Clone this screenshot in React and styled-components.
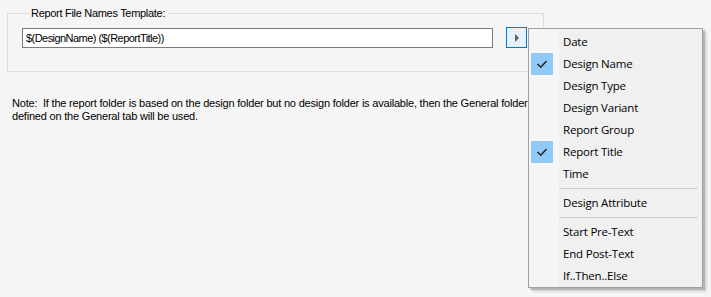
import React from "react";
import styled, { createGlobalStyle } from "styled-components";

const Global = createGlobalStyle`
  html, body { margin: 0; padding: 0; background: #f5f5f5; }
  body { width: 711px; height: 297px; overflow: hidden; }
`;

const Page = styled.div`
  position: relative;
  width: 711px;
  height: 297px;
  background: #f5f5f5;
  font-family: "Liberation Sans", Arial, sans-serif;
  font-size: 11px;
  color: #000;
  padding: 7px 0 0 7px;
  box-sizing: border-box;
`;

const Group = styled.fieldset`
  width: 537px;
  height: 65px;
  box-sizing: border-box;
  margin: 0;
  padding: 8px 0 0 14px;
  border: 1px solid #dcdcdc;
  border-radius: 0;
  display: flex;
  align-items: flex-start;
  gap: 13px;
  legend {
    margin-left: 7px;
    padding: 0 3px 0 2px;
    line-height: 13px;
    letter-spacing: -0.3px;
  }
`;

const Input = styled.div`
  width: 471px;
  height: 20px;
  box-sizing: border-box;
  border: 1px solid #7a7a7a;
  background: #fff;
  padding: 0 0 0 3px;
  line-height: 18px;
  letter-spacing: -0.55px;
`;

const ArrowButton = styled.div`
  width: 21px;
  height: 21px;
  margin-top: -1px;
  box-sizing: border-box;
  border: 1px solid #0078d7;
  background: #e5f1fb;
  display: flex;
  align-items: center;
  justify-content: center;
  &::after {
    content: "";
    border-left: 4px solid #606060;
    border-top: 4px solid transparent;
    border-bottom: 4px solid transparent;
    margin-left: 1px;
  }
`;

const Note = styled.p`
  margin: 25px 0 0 5px;
  line-height: 13px;
  width: 560px;
  letter-spacing: -0.2px;
`;

const Menu = styled.div`
  position: absolute;
  left: 528px;
  top: 28px;
  width: 175px;
  height: 260px;
  box-sizing: border-box;
  border: 1px solid #a0a0a0;
  background: linear-gradient(to right, #f5f5f5 0 30px, #f0f0f0 30px);
  box-shadow: 2px 2px 1px rgba(0, 0, 0, 0.18), 4px 4px 2px rgba(0, 0, 0, 0.1);
  padding: 2px 2px 0 2px;
  font-family: "Open Sans", "Noto Sans", sans-serif;
  font-size: 11.5px;
  color: #000;
  display: flex;
  flex-direction: column;
`;

const Item = styled.div`
  height: 22px;
  flex: none;
  display: flex;
  align-items: center;
  gap: 10px;
`;

const Check = styled.div`
  width: 22px;
  height: 22px;
  display: flex;
  align-items: center;
  justify-content: center;
  background: ${(p) => (p.$on ? "#90c8f6" : "transparent")};
`;

const Label = styled.span`
  line-height: 22px;
  letter-spacing: -0.2px;
`;

const Separator = styled.div`
  height: 1px;
  flex: none;
  background: #d0d0d0;
  margin: 3px 2px 3px 28px;
`;

const CheckMark = () => (
  <svg width="12" height="10" viewBox="0 0 12 10">
    <path d="M1.5 5 L4.8 8.2 L10.5 2" fill="none" stroke="#222" strokeWidth="1.5" />
  </svg>
);

const groups = [
  [
    ["Date"],
    ["Design Name", true],
    ["Design Type"],
    ["Design Variant"],
    ["Report Group"],
    ["Report Title", true],
    ["Time"],
  ],
  [["Design Attribute"]],
  [["Start Pre-Text"], ["End Post-Text"], ["If..Then..Else"]],
];

export default function App() {
  return (
    <Page>
      <Global />
      <Group>
        <legend>Report File Names Template:</legend>
        <Input>$(DesignName) ($(ReportTitle))</Input>
        <ArrowButton />
      </Group>
      <Note>
        Note:&nbsp; If the report folder is based on the design folder but no design folder is available, then the General folder
        <br />
        defined on the General tab will be used.
      </Note>
      <Menu>
        {groups.map((g, gi) => (
          <React.Fragment key={gi}>
            {gi > 0 && <Separator />}
            {g.map(([label, on]) => (
              <Item key={label}>
                <Check $on={on}>{on && <CheckMark />}</Check>
                <Label>{label}</Label>
              </Item>
            ))}
          </React.Fragment>
        ))}
      </Menu>
    </Page>
  );
}
